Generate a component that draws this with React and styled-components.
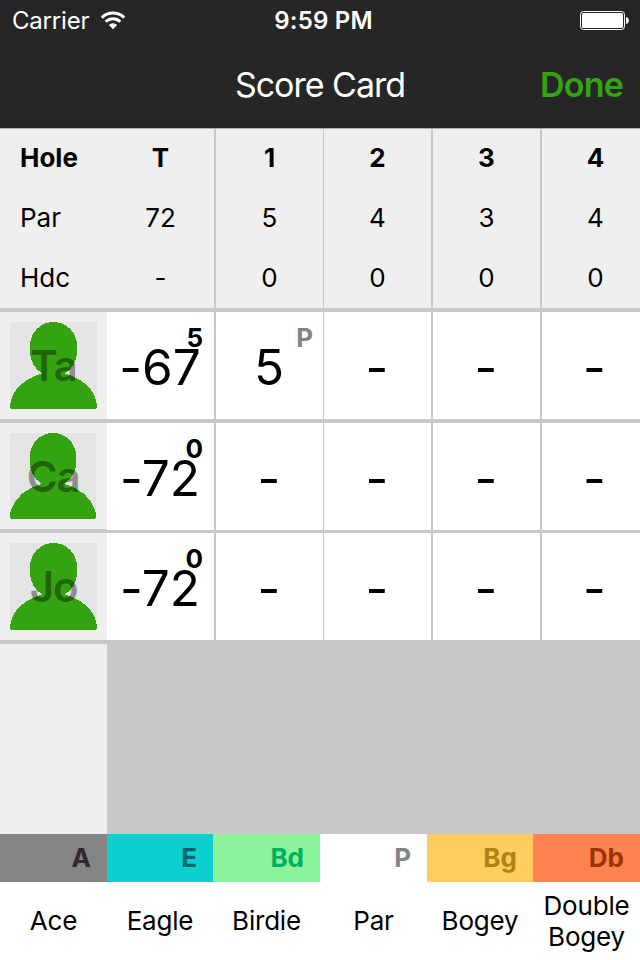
import React from "react";
import styled, { createGlobalStyle } from "styled-components";

const holes = [
  { id: 1, par: 5, hdc: 0 },
  { id: 2, par: 4, hdc: 0 },
  { id: 3, par: 3, hdc: 0 },
  { id: 4, par: 4, hdc: 0 },
];

const players = [
  { id: 1, initials: "Ta", total: "-67", played: "5", scores: ["5", "-", "-", "-"], marks: ["P"] },
  { id: 2, initials: "Ca", total: "-72", played: "0", scores: ["-", "-", "-", "-"], marks: [] },
  { id: 3, initials: "Jo", total: "-72", played: "0", scores: ["-", "-", "-", "-"], marks: [] },
];

const legend = [
  { code: "A", name: "Ace", bg: "#848484", color: "#302834" },
  { code: "E", name: "Eagle", bg: "#0ccfcf", color: "#00676b" },
  { code: "Bd", name: "Birdie", bg: "#8cf29b", color: "#00b162" },
  { code: "P", name: "Par", bg: "#ffffff", color: "#848484" },
  { code: "Bg", name: "Bogey", bg: "#ffcc5f", color: "#ae8216" },
  { code: "Db", name: "Double Bogey", bg: "#ff8350", color: "#9c3400" },
];

function WifiIcon() {
  return (
    <svg width="26" height="19" viewBox="0 0 26 19" fill="none">
      <path d="M1.8 6.6 A15.8 15.8 0 0 1 24.2 6.6" stroke="#fff" strokeWidth="3" />
      <path d="M5.7 10.8 A10.3 10.3 0 0 1 20.3 10.8" stroke="#fff" strokeWidth="2.8" />
      <path d="M8.9 14 A5.9 5.9 0 0 1 17.1 14 L13 18.2 Z" fill="#fff" />
    </svg>
  );
}

function BatteryIcon() {
  return (
    <svg width="49" height="19" viewBox="0 0 49 19">
      <rect x="0.5" y="0.5" width="44" height="18" rx="3" fill="none" stroke="#fff" />
      <rect x="2" y="2" width="41" height="15" rx="1.6" fill="#fff" />
      <path d="M46 6 C49.8 6.5 49.8 12.5 46 13 Z" fill="#fff" />
    </svg>
  );
}

function Avatar({ initials, size }) {
  return (
    <AvatarBox $size={size}>
      <svg width={size} height={size} viewBox="0 0 87 87" preserveAspectRatio="none" shapeRendering="crispEdges">
        <path
          d="M43.5 0 C57 0 67 11 67 24 V30 C67 39 62 47 55 51.5 C72 56 86 68 87 84 Q87 87 84 87 H3 Q0 87 0 84 C1 68 15 56 32 51.5 C25 47 20 39 20 30 V24 C20 11 30 0 43.5 0 Z"
          fill="#34a311"
        />
      </svg>
      <Initials>{initials}</Initials>
    </AvatarBox>
  );
}

export default function App() {
  return (
    <Root>
      <GlobalStyle />
      <StatusBar>
        <Carrier>
          <span>Carrier</span>
          <WifiIcon />
        </Carrier>
        <Clock>9:59 PM</Clock>
        <Battery>
          <BatteryIcon />
        </Battery>
      </StatusBar>
      <NavBar>
        <Title>Score Card</Title>
        <Done>Done</Done>
      </NavBar>

      <HoleRow>
        <HeadCell $label>
          <b>Hole</b>
          <span>Par</span>
          <span>Hdc</span>
        </HeadCell>
        <HeadCell>
          <b>T</b>
          <span>72</span>
          <span>-</span>
        </HeadCell>
        {holes.map((h, i) => (
          <HeadCell key={h.id} $line={i === 1 ? 1 : 2}>
            <b>{h.id}</b>
            <span>{h.par}</span>
            <span>{h.hdc}</span>
          </HeadCell>
        ))}
      </HoleRow>

      {players.map((p) => (
        <PlayerRow key={p.id} $gap={p.id === 2 ? 3 : 4}>
          <PlayerCell $short={p.id === 2}>
            <Avatar initials={p.initials} size={p.id === 2 ? 86 : 87} />
          </PlayerCell>
          <ScoreCell>
            {p.total}
            <Mark>{p.played}</Mark>
          </ScoreCell>
          {p.scores.map((s, i) => (
            <ScoreCell key={i} $line={i === 1 ? 1 : 2}>
              <span>{s}</span>
              {p.marks[i] && <Mark $color="#848484">{p.marks[i]}</Mark>}
            </ScoreCell>
          ))}
        </PlayerRow>
      ))}
      <Rest />

      <Legend>
        {legend.map((l) => (
          <LegendItem key={l.code}>
            <Swatch $bg={l.bg} $color={l.color}>
              {l.code}
            </Swatch>
            <LegendName>{l.name}</LegendName>
          </LegendItem>
        ))}
      </Legend>
    </Root>
  );
}

const GlobalStyle = createGlobalStyle`
  body {
    margin: 0;
  }
  * {
    box-sizing: border-box;
  }
`;

const Root = styled.div`
  width: 640px;
  height: 960px;
  display: flex;
  flex-direction: column;
  overflow: hidden;
  background: #c8c8c8;
  color: #000;
  font-family: Inter, "Liberation Sans", sans-serif;
  font-size: 26px;
  font-feature-settings: "calt" 0;
`;

const StatusBar = styled.div`
  height: 40px;
  flex: none;
  display: grid;
  grid-template-columns: 1fr auto 1fr;
  align-items: center;
  padding: 0 11px 0 12px;
  background: #262626;
  color: #fff;
  font-size: 24px;
`;

const Carrier = styled.div`
  display: flex;
  align-items: center;
  gap: 11px;
  letter-spacing: -0.2px;
`;

const Clock = styled.div`
  padding-left: 6px;
  font-weight: 600;
  letter-spacing: 0.2px;
`;

const Battery = styled.div`
  display: flex;
  justify-content: flex-end;
`;

const NavBar = styled.div`
  height: 88px;
  flex: none;
  display: grid;
  grid-template-columns: 1fr auto 1fr;
  align-items: center;
  padding: 0 16px;
  background: #262626;
  font-size: 34px;
`;

const Title = styled.div`
  grid-column: 2;
  color: #fff;
  letter-spacing: -1px;
`;

const Done = styled.div`
  justify-self: end;
  padding-right: 1px;
  color: #34a311;
  font-weight: 600;
  letter-spacing: -0.8px;
`;

const HoleRow = styled.div`
  height: 184px;
  flex: none;
  display: grid;
  grid-template-columns: 107px 107px 109px 108px 109px 100px;
  border-top: 1px solid #b0b0b0;
  border-bottom: 4px solid #c8c8c8;
  background: #efefef;
`;

const HeadCell = styled.div`
  display: grid;
  grid-template-rows: 57px 62px 59px;
  align-items: center;
  justify-items: ${(p) => (p.$label ? "start" : "center")};
  padding-left: ${(p) => (p.$label ? "20px" : "0")};
  border-left: ${(p) => p.$line || 0}px solid #c8c8c8;

  &:last-child {
    margin-right: -9px;
  }
`;

const PlayerRow = styled.div`
  flex: none;
  display: grid;
  grid-template-columns: 107px 107px 109px 108px 109px 100px;
  grid-template-rows: 107px;
  border-bottom: ${(p) => p.$gap}px solid #c8c8c8;
`;

const PlayerCell = styled.div`
  padding: 10px;
  background: #efefef;
  border-bottom: ${(p) => (p.$short ? 1 : 0)}px solid #c8c8c8;
`;

const AvatarBox = styled.div`
  position: relative;
  width: ${(p) => p.$size}px;
  height: ${(p) => p.$size}px;
  background: #e4e4e4;

  svg {
    display: block;
  }
`;

const Initials = styled.div`
  position: absolute;
  inset: 0;
  display: flex;
  align-items: center;
  justify-content: center;
  color: rgba(0, 0, 0, 0.4);
  font-size: 42px;
  font-weight: 600;
  letter-spacing: -1.2px;
`;

const ScoreCell = styled.div`
  position: relative;
  display: flex;
  align-items: center;
  justify-content: center;
  padding: 3px 1px 0 0;
  background: #fff;
  border-left: ${(p) => p.$line || 0}px solid #c8c8c8;
  font-size: 49.5px;

  &:last-child {
    padding-left: 8px;
  }
`;

const Mark = styled.span`
  position: absolute;
  top: 10px;
  right: ${(p) => (p.$color ? "10px" : "11px")};
  color: ${(p) => p.$color || "#000"};
  font-size: 26px;
  font-weight: 700;
  line-height: 32px;
`;

const Rest = styled.div`
  flex: 1;
  width: 107px;
  background: #efefef;
`;

const Legend = styled.div`
  height: 126px;
  flex: none;
  display: grid;
  grid-template-columns: 107px 106px 107px 107px 106px 107px;
  background: #fff;
`;

const LegendItem = styled.div`
  display: grid;
  grid-template-rows: 48px 78px;
`;

const Swatch = styled.div`
  display: flex;
  align-items: center;
  justify-content: flex-end;
  padding: 0 16px 1px 0;
  background: ${(p) => p.$bg};
  color: ${(p) => p.$color};
  font-weight: 700;
`;

const LegendName = styled.div`
  display: flex;
  align-items: center;
  justify-content: center;
  padding-bottom: 1px;
  line-height: 31px;
  letter-spacing: -0.2px;
  text-align: center;
`;
